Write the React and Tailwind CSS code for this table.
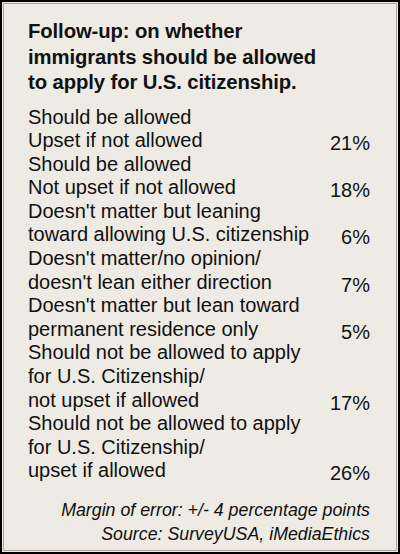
export default function App() {
  const rows = [
    { lines: ["Should be allowed", "Upset if not allowed"], pct: "21%" },
    { lines: ["Should be allowed", "Not upset if not allowed"], pct: "18%" },
    { lines: ["Doesn't matter but leaning", "toward allowing U.S. citizenship"], pct: "6%" },
    { lines: ["Doesn't matter/no opinion/", "doesn't lean either direction"], pct: "7%" },
    { lines: ["Doesn't matter but lean toward", "permanent residence only"], pct: "5%" },
    { lines: ["Should not be allowed to apply", "for U.S. Citizenship/", "not upset if allowed"], pct: "17%" },
    { lines: ["Should not be allowed to apply", "for U.S. Citizenship/", "upset if allowed"], pct: "26%" },
  ];
  return (
    <div className="w-[400px] h-[554px] border-2 border-black bg-[#edebe3] p-px" style={{ fontFamily: '"Liberation Sans", Arial, sans-serif' }}>
      <div className="w-full h-full border border-[#a8a69e] text-[#111] pl-[24px] pr-[26px] pt-[15px]">
        <div className="font-bold text-[20.3px] leading-[25.5px] tracking-[-0.1px] whitespace-nowrap">
          <div>Follow-up: on whether</div>
          <div>immigrants should be allowed</div>
          <div>to apply for U.S. citizenship.</div>
        </div>
        <div className="mt-[10px] text-[20px] leading-[23.6px] whitespace-nowrap">
          {rows.map((r, i) => (
            <div key={i} className="flex items-end justify-between">
              <div>
                {r.lines.map((l, j) => (
                  <div key={j}>{l}</div>
                ))}
              </div>
              <div className="mb-[-3px]">{r.pct}</div>
            </div>
          ))}
        </div>
        <div className="mt-[15px] text-right italic text-[17.8px] leading-[24px] whitespace-nowrap">
          <div>Margin of error: +/- 4 percentage points</div>
          <div>Source: SurveyUSA, iMediaEthics</div>
        </div>
      </div>
    </div>
  );
}
